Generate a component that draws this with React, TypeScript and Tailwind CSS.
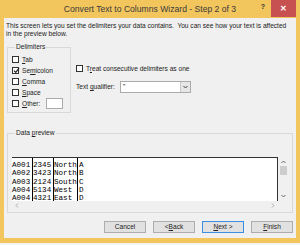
import { ReactNode } from 'react';

const rows = [
  ['A001', '2345', 'North', 'A'],
  ['A002', '3423', 'North', 'B'],
  ['A003', '2124', 'South', 'C'],
  ['A004', '5134', 'West', 'D'],
  ['A004', '4321', 'East', 'D'],
];

const ui = { fontFamily: '"Liberation Sans", Arial, sans-serif' };

function Box({ checked = false }: { checked?: boolean }) {
  return (
    <span className="grid h-[7px] w-[7px] shrink-0 place-items-center border border-[#333] bg-white">
      {checked && (
        <svg width="7" height="7" viewBox="0 0 7 7" className="-mt-[1px]">
          <path d="M1 3.6 L2.8 5.4 L6 1.2" fill="none" stroke="#222" strokeWidth="1.2" />
        </svg>
      )}
    </span>
  );
}

function Check({ label, checked }: { label: ReactNode; checked?: boolean }) {
  return (
    <div className="flex h-[11px] items-center gap-[3px] whitespace-nowrap">
      <Box checked={checked} />
      <span>{label}</span>
    </div>
  );
}

function Btn({ children, focused = false }: { children: ReactNode; focused?: boolean }) {
  return (
    <button
      type="button"
      className={`flex h-[12px] w-[42px] items-center justify-center border bg-[#e1e1e1] text-[6.6px] leading-none text-[#222] ${
        focused ? 'border-[#3c8ee0]' : 'border-[#adadad]'
      }`}
    >
      {children}
    </button>
  );
}

export default function App() {
  return (
    <div className="h-[245px] w-[300px] overflow-hidden bg-[#f4f4f4]" style={ui}>
      <div className="flex h-[243px] w-[300px] flex-col bg-[#f2c55d] px-[4px] pb-[5px]">
        {/* Title bar */}
        <div className="relative flex h-[18px] shrink-0 items-center justify-center">
          <span className="text-[8.6px] leading-none text-[#3a3a3a]">Convert Text to Columns Wizard - Step 2 of 3</span>
          <span className="absolute right-[31px] top-[3px] text-[7px] font-bold leading-none text-[#333]">?</span>
          <span className="absolute right-0 top-0 flex h-[17px] w-[25px] items-center justify-center bg-[#c75050] text-[8px] font-bold leading-none text-white">
            ✕
          </span>
        </div>

        {/* Client area */}
        <div className="flex flex-1 flex-col bg-[#f0f0f0] pl-[2px] pr-[3px] pt-[4px] text-[6.6px] leading-[8px] text-[#222]">
          <p className="leading-[8px]">
            This screen lets you set the delimiters your data contains.&nbsp; You can see how your text is affected in the preview below.
          </p>

          <div className="ml-[1px] mt-[5px] flex">
            <fieldset className="w-[64px] border border-[#d9d9d9] pb-[3px] pl-[4px] pt-[3px]">
              <legend className="ml-[3px] px-[1px] leading-[8px]">Delimiters</legend>
              <Check label={<><u>T</u>ab</>} />
              <Check checked label={<>Se<u>m</u>icolon</>} />
              <Check label={<><u>C</u>omma</>} />
              <Check label={<><u>S</u>pace</>} />
              <div className="flex h-[11px] items-center gap-[3px]">
                <Box />
                <span><u>O</u>ther:</span>
                <span className="ml-[3px] h-[11px] w-[17px] border border-[#ababab] bg-white" />
              </div>
            </fieldset>

            <div className="ml-[5px] flex flex-col pt-[20px]">
              <Check label={<>T<u>r</u>eat consecutive delimiters as one</>} />
              <div className="mt-[7px] flex items-center">
                <span className="w-[44px] whitespace-nowrap">Text <u>q</u>ualifier:</span>
                <div className="flex h-[12px] w-[71px] border border-[#ababab] bg-white">
                  <span className="flex-1 pl-[2px] leading-[10px]">"</span>
                  <span className="flex w-[10px] items-center justify-center border-l border-[#c8c8c8] bg-[#e6e6e6]">
                    <svg width="5" height="4" viewBox="0 0 5 4">
                      <path d="M0.5 1 L2.5 3 L4.5 1" fill="none" stroke="#444" strokeWidth="1" />
                    </svg>
                  </span>
                </div>
              </div>
            </div>
          </div>

          <fieldset className="ml-[1px] mt-[16px] border border-[#d9d9d9] pb-[2px] pl-[4px] pr-[4px] pt-[20px]">
            <legend className="ml-[3px] px-[1px] leading-[8px]">Data <u>p</u>review</legend>
            <div className="flex flex-col">
              <div className="flex h-[44px]">
                <div className="flex flex-1 border-r border-t border-[#333] bg-white font-['Liberation_Mono',monospace] text-[7.6px] leading-[8.25px] text-black">
                  {[0, 1, 2].map((c) => (
                    <div key={c} className={`flex flex-col border-r border-black pt-[3px] ${c === 2 ? 'w-[24px]' : 'w-[21px]'}`}>
                      {rows.map((r, i) => (
                        <span key={i}>{r[c]}</span>
                      ))}
                    </div>
                  ))}
                  <div className="flex flex-col pl-[1px] pt-[3px]">
                    {rows.map((r, i) => (
                      <span key={i}>{r[3]}</span>
                    ))}
                  </div>
                </div>
                <div className="flex w-[10px] flex-col items-center bg-[#f0f0f0] pt-[3px]">
                  <svg width="5" height="4" viewBox="0 0 5 4">
                    <path d="M0.5 3 L2.5 1 L4.5 3" fill="none" stroke="#666" strokeWidth="1" />
                  </svg>
                  <span className="mt-[2px] h-[9px] w-[7px] bg-[#cdcdcd]" />
                  <span className="flex-1" />
                  <svg width="5" height="4" viewBox="0 0 5 4" className="mb-[3px]">
                    <path d="M0.5 1 L2.5 3 L4.5 1" fill="none" stroke="#666" strokeWidth="1" />
                  </svg>
                </div>
              </div>
              <div className="flex h-[9px] items-center justify-between bg-[#f0f0f0] px-[3px]">
                <svg width="4" height="5" viewBox="0 0 4 5">
                  <path d="M3 0.5 L1 2.5 L3 4.5" fill="none" stroke="#aaa" strokeWidth="1" />
                </svg>
                <svg width="4" height="5" viewBox="0 0 4 5" className="mr-[10px]">
                  <path d="M1 0.5 L3 2.5 L1 4.5" fill="none" stroke="#aaa" strokeWidth="1" />
                </svg>
              </div>
            </div>
          </fieldset>

          <div className="mt-[8px] flex justify-end gap-[7px]">
            <Btn>Cancel</Btn>
            <Btn>&lt; <u>B</u>ack</Btn>
            <Btn focused>
              <u>N</u>ext &gt;
            </Btn>
            <Btn>
              <u>F</u>inish
            </Btn>
          </div>
        </div>
      </div>
    </div>
  );
}
